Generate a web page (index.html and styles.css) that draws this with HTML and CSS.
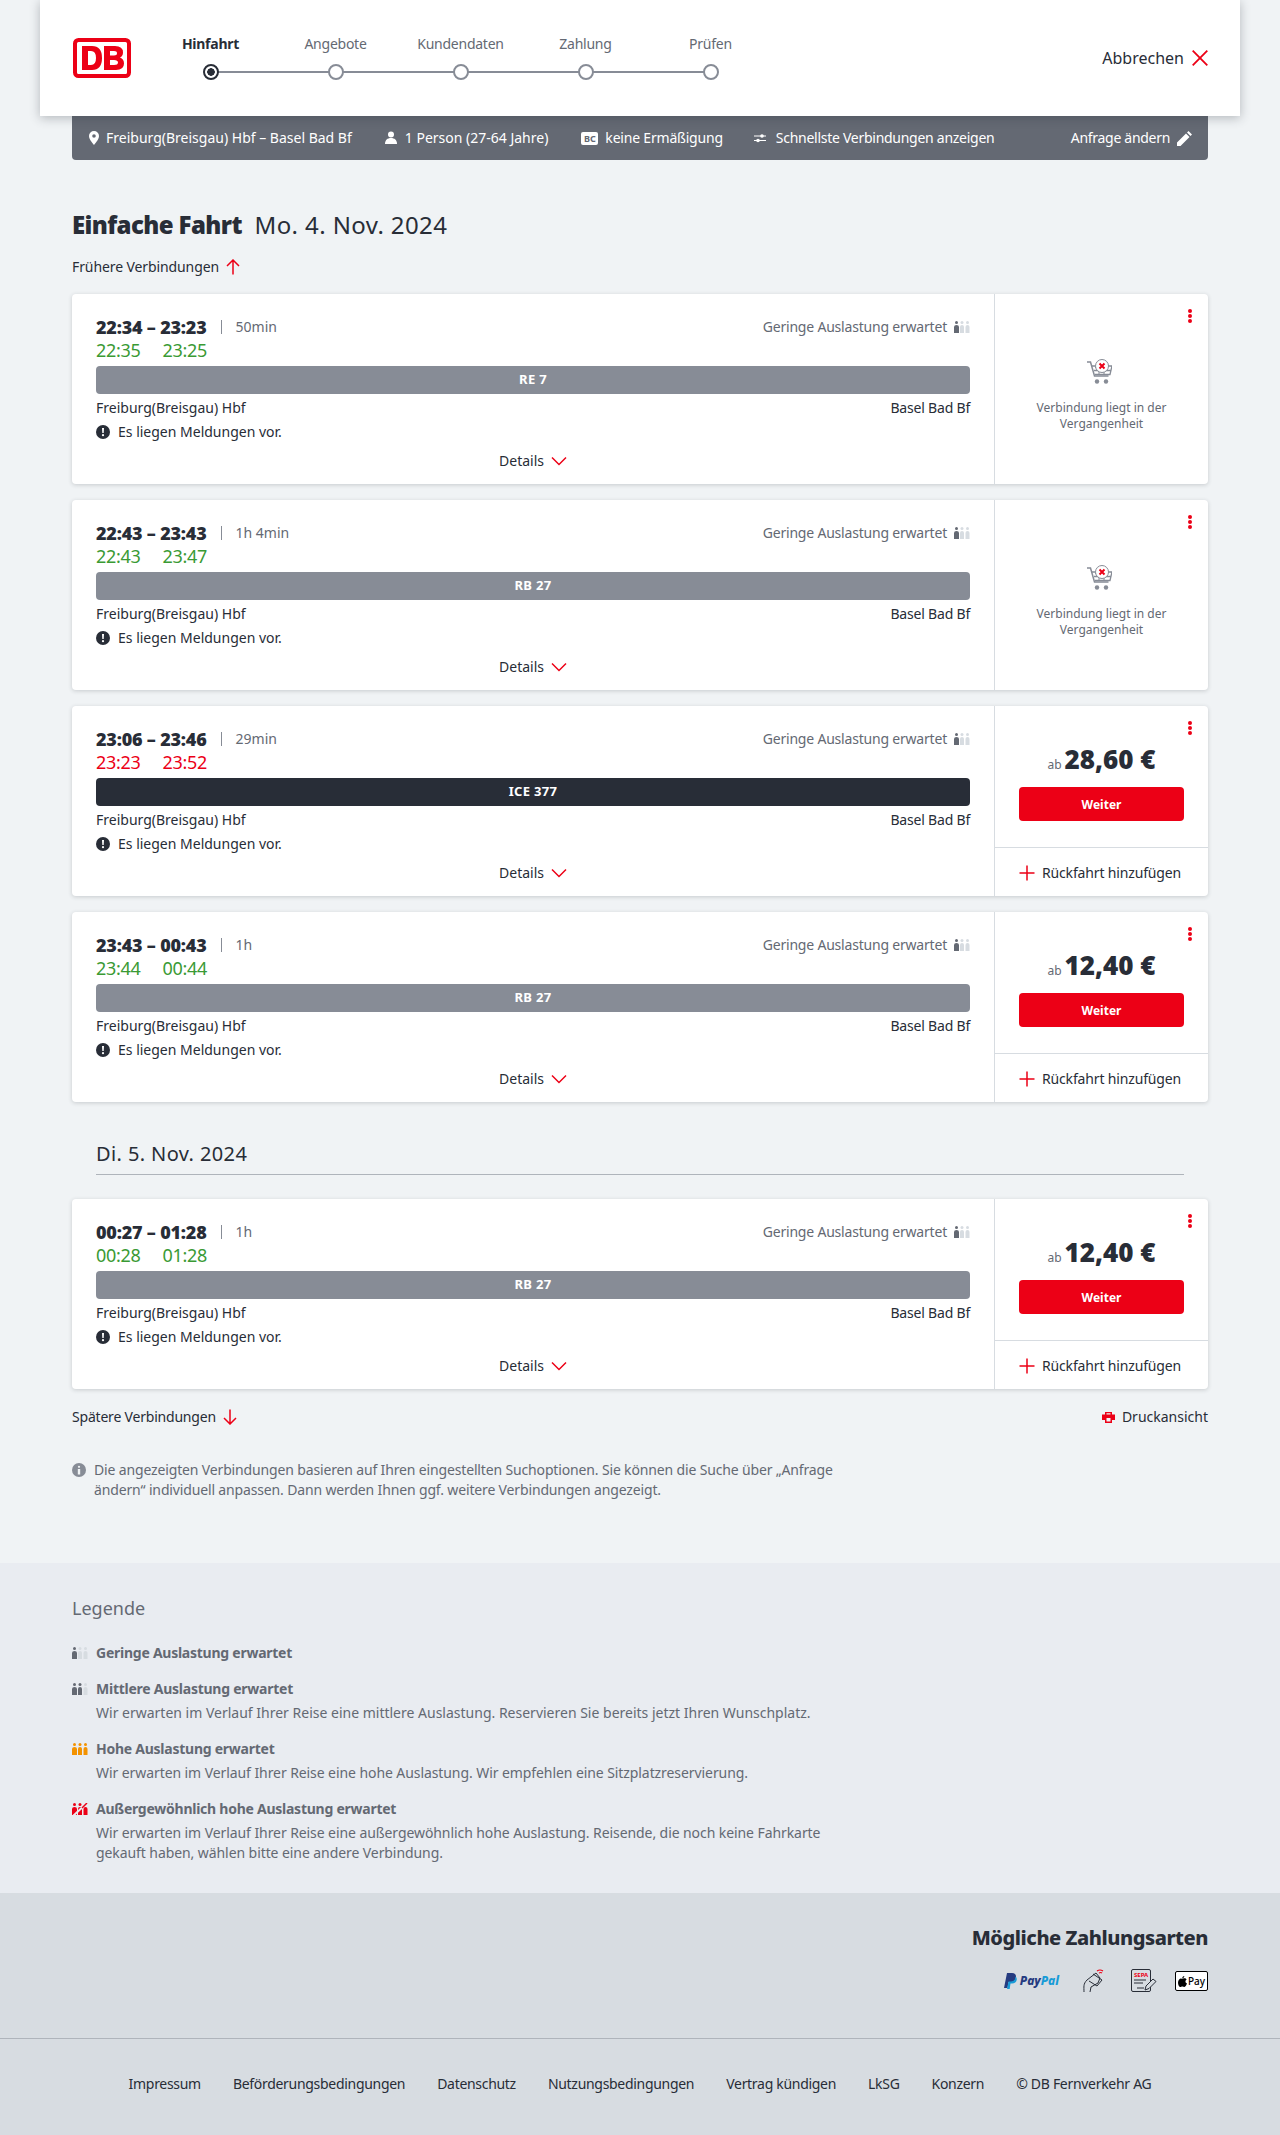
FILE: index.html
```html
<!DOCTYPE html>
<html lang="de">
    <head>
        <title>Verbindungen</title>
        <link rel="stylesheet" href="styles.css">
    </head>
    <body>
        <!-- Shared icons -->
        <svg class="sprite" width="0" height="0">
            <symbol id="i-load" viewBox="0 0 16 12">
                <circle cx="2.5" cy="1.6" r="1.5"/><path d="M0 12V6q0-2 2.5-2T5 6v6z"/>
                <g class="load-off"><circle cx="8" cy="1.6" r="1.5"/><path d="M6 12V6q0-2 2-2t2 2v6z"/><circle cx="13.5" cy="1.6" r="1.5"/><path d="M11.5 12V6q0-2 2-2t2 2v6z"/></g>
            </symbol>
            <symbol id="i-alert" viewBox="0 0 14 14">
                <circle cx="7" cy="7" r="7" fill="#282d37"/><path d="M6 3h2l-.3 5H6.3z" fill="#fff"/><circle cx="7" cy="10.2" r="1.1" fill="#fff"/>
            </symbol>
            <symbol id="i-chev" viewBox="0 0 16 10">
                <path d="M1 1.5l7 7 7-7" fill="none" stroke="#ec0016" stroke-width="1.5"/>
            </symbol>
            <symbol id="i-cart" viewBox="0 0 25 25">
                <path d="M0 3h3.500l4 14h14" fill="none" stroke="#878c96" stroke-width="1.500"/>
                <path d="M5 7h3M20 7h5l-2 8.500H8M7 11.500h16.500" fill="none" stroke="#878c96" stroke-width="1.300"/>
                <path d="M8 8l4 3.500M19 8l-2 3.500M12 11.500v4.500M17 11.500v4.500" fill="none" stroke="#878c96"/>
                <circle cx="15" cy="7" r="6.500" fill="#fff" stroke="#878c96"/>
                <path d="M12.500 4.500l5 5M17.500 4.500l-5 5" stroke="#ec0016" stroke-width="2"/>
                <circle cx="10" cy="22.500" r="2.200" fill="#878c96"/><circle cx="19" cy="22.500" r="2.200" fill="#878c96"/>
            </symbol>
            <symbol id="i-plus" viewBox="0 0 16 16">
                <path d="M8 .5v15M.5 8h15" stroke="#ec0016" stroke-width="1.500"/>
            </symbol>
        </svg>

        <!-- Header with stepper -->
        <header class="header">
            <svg class="logo" viewBox="0 0 58 40">
                <rect x="2" y="2" width="54" height="36" rx="3.500" fill="#fff" stroke="#ec0016" stroke-width="4"/>
                <path fill="#ec0016" fill-rule="evenodd" d="M9 8h10q10 0 10 12t-10 12H9zm6 5v14h3q5 0 5-7t-5-7zM31 8h11q8 0 8 6.500 0 3.500-3 5 4 1.500 4 6 0 6.500-8 6.500H31zm6 5v4.500h4q3 0 3-2.250T41 13zm0 9v5h4q4 0 4-2.500T41 22z"/>
            </svg>
            <ol class="steps">
                <li class="step active"><span>Hinfahrt</span><i class="dot"></i></li>
                <li class="step"><span>Angebote</span><i class="dot"></i></li>
                <li class="step"><span>Kundendaten</span><i class="dot"></i></li>
                <li class="step"><span>Zahlung</span><i class="dot"></i></li>
                <li class="step"><span>Prüfen</span><i class="dot"></i></li>
            </ol>
            <a class="cancel">Abbrechen
                <svg width="16" height="16" viewBox="0 0 16 16"><path d="M.7.7l14.600 14.600M15.300.7L.7 15.300" stroke="#ec0016" stroke-width="1.800"/></svg>
            </a>
        </header>

        <main class="main">
            <!-- Search summary -->
            <div class="query">
                <span class="q-item q-route">
                    <svg width="12" height="14" viewBox="0 0 12 14"><path fill="#fff" fill-rule="evenodd" d="M6 0a5 5 0 0 1 5 5c0 3.500-5 9-5 9S1 8.500 1 5a5 5 0 0 1 5-5zm0 3.200a1.800 1.800 0 1 0 0 3.600 1.800 1.800 0 0 0 0-3.600z"/></svg>
                    Freiburg(Breisgau) Hbf – Basel Bad Bf
                </span>
                <span class="q-item q-person">
                    <svg width="12" height="14" viewBox="0 0 12 14"><circle cx="6" cy="3.500" r="3" fill="#fff"/><path fill="#fff" d="M0 13c0-4 2.500-6 6-6s6 2 6 6z"/></svg>
                    1 Person (27-64 Jahre)
                </span>
                <span class="q-item q-card">
                    <b class="bc">BC</b>
                    keine Ermäßigung
                </span>
                <span class="q-item q-fast">
                    <svg width="12" height="10" viewBox="0 0 12 10"><path d="M0 3h12M0 7.500h12" stroke="#fff"/><circle cx="8" cy="3" r="1.800" fill="#fff"/><circle cx="4" cy="7.500" r="1.800" fill="#fff"/></svg>
                    Schnellste Verbindungen anzeigen
                </span>
                <a class="q-edit">Anfrage ändern
                    <svg width="15" height="15" viewBox="0 0 15 15"><path fill="#fff" d="M0 15v-3.500L9 2.500l3.500 3.500L3.500 15zM10 1.500L11.500 0 15 3.500 13.500 5z"/></svg>
                </a>
            </div>

            <h1 class="title"><b>Einfache Fahrt</b> Mo. 4. Nov. 2024</h1>

            <a class="more">Frühere Verbindungen
                <svg width="14" height="16" viewBox="0 0 14 16"><path d="M7 15.500V1M1 7l6-6 6 6" fill="none" stroke="#ec0016" stroke-width="1.500"/></svg>
            </a>

            <!-- Connection 1 -->
            <article class="card">
                <div class="card-main">
                    <div class="row-top">
                        <span class="times">22:34 – 23:23</span><span class="sep"></span><span class="duration">50min</span>
                        <span class="load">Geringe Auslastung erwartet <svg class="load-icon"><use href="#i-load"/></svg></span>
                    </div>
                    <div class="row-delay"><span class="ok">22:35</span><span class="ok">23:25</span></div>
                    <div class="train">RE 7</div>
                    <div class="row-stations"><span>Freiburg(Breisgau) Hbf</span><span>Basel Bad Bf</span></div>
                    <div class="row-alert"><svg width="14" height="14"><use href="#i-alert"/></svg>Es liegen Meldungen vor.</div>
                    <div class="row-details">Details <svg width="16" height="10"><use href="#i-chev"/></svg></div>
                </div>
                <div class="card-side past">
                    <i class="menu"></i>
                    <svg class="cart" width="25" height="25"><use href="#i-cart"/></svg>
                    <p>Verbindung liegt in der Vergangenheit</p>
                </div>
            </article>

            <!-- Connection 2 -->
            <article class="card">
                <div class="card-main">
                    <div class="row-top">
                        <span class="times">22:43 – 23:43</span><span class="sep"></span><span class="duration">1h 4min</span>
                        <span class="load">Geringe Auslastung erwartet <svg class="load-icon"><use href="#i-load"/></svg></span>
                    </div>
                    <div class="row-delay"><span class="ok">22:43</span><span class="ok">23:47</span></div>
                    <div class="train">RB 27</div>
                    <div class="row-stations"><span>Freiburg(Breisgau) Hbf</span><span>Basel Bad Bf</span></div>
                    <div class="row-alert"><svg width="14" height="14"><use href="#i-alert"/></svg>Es liegen Meldungen vor.</div>
                    <div class="row-details">Details <svg width="16" height="10"><use href="#i-chev"/></svg></div>
                </div>
                <div class="card-side past">
                    <i class="menu"></i>
                    <svg class="cart" width="25" height="25"><use href="#i-cart"/></svg>
                    <p>Verbindung liegt in der Vergangenheit</p>
                </div>
            </article>

            <!-- Connection 3 -->
            <article class="card">
                <div class="card-main">
                    <div class="row-top">
                        <span class="times">23:06 – 23:46</span><span class="sep"></span><span class="duration">29min</span>
                        <span class="load">Geringe Auslastung erwartet <svg class="load-icon"><use href="#i-load"/></svg></span>
                    </div>
                    <div class="row-delay"><span class="late">23:23</span><span class="late">23:52</span></div>
                    <div class="train ice">ICE 377</div>
                    <div class="row-stations"><span>Freiburg(Breisgau) Hbf</span><span>Basel Bad Bf</span></div>
                    <div class="row-alert"><svg width="14" height="14"><use href="#i-alert"/></svg>Es liegen Meldungen vor.</div>
                    <div class="row-details">Details <svg width="16" height="10"><use href="#i-chev"/></svg></div>
                </div>
                <div class="card-side">
                    <i class="menu"></i>
                    <div class="offer">
                        <div class="price"><small>ab</small> 28,60 €</div>
                        <button class="next">Weiter</button>
                    </div>
                    <div class="return"><svg width="16" height="16"><use href="#i-plus"/></svg>Rückfahrt hinzufügen</div>
                </div>
            </article>

            <!-- Connection 4 -->
            <article class="card">
                <div class="card-main">
                    <div class="row-top">
                        <span class="times">23:43 – 00:43</span><span class="sep"></span><span class="duration">1h</span>
                        <span class="load">Geringe Auslastung erwartet <svg class="load-icon"><use href="#i-load"/></svg></span>
                    </div>
                    <div class="row-delay"><span class="ok">23:44</span><span class="ok">00:44</span></div>
                    <div class="train">RB 27</div>
                    <div class="row-stations"><span>Freiburg(Breisgau) Hbf</span><span>Basel Bad Bf</span></div>
                    <div class="row-alert"><svg width="14" height="14"><use href="#i-alert"/></svg>Es liegen Meldungen vor.</div>
                    <div class="row-details">Details <svg width="16" height="10"><use href="#i-chev"/></svg></div>
                </div>
                <div class="card-side">
                    <i class="menu"></i>
                    <div class="offer">
                        <div class="price"><small>ab</small> 12,40 €</div>
                        <button class="next">Weiter</button>
                    </div>
                    <div class="return"><svg width="16" height="16"><use href="#i-plus"/></svg>Rückfahrt hinzufügen</div>
                </div>
            </article>

            <h2 class="day">Di. 5. Nov. 2024</h2>

            <!-- Connection 5 -->
            <article class="card">
                <div class="card-main">
                    <div class="row-top">
                        <span class="times">00:27 – 01:28</span><span class="sep"></span><span class="duration">1h</span>
                        <span class="load">Geringe Auslastung erwartet <svg class="load-icon"><use href="#i-load"/></svg></span>
                    </div>
                    <div class="row-delay"><span class="ok">00:28</span><span class="ok">01:28</span></div>
                    <div class="train">RB 27</div>
                    <div class="row-stations"><span>Freiburg(Breisgau) Hbf</span><span>Basel Bad Bf</span></div>
                    <div class="row-alert"><svg width="14" height="14"><use href="#i-alert"/></svg>Es liegen Meldungen vor.</div>
                    <div class="row-details">Details <svg width="16" height="10"><use href="#i-chev"/></svg></div>
                </div>
                <div class="card-side">
                    <i class="menu"></i>
                    <div class="offer">
                        <div class="price"><small>ab</small> 12,40 €</div>
                        <button class="next">Weiter</button>
                    </div>
                    <div class="return"><svg width="16" height="16"><use href="#i-plus"/></svg>Rückfahrt hinzufügen</div>
                </div>
            </article>

            <div class="below">
                <a class="more later">Spätere Verbindungen
                    <svg width="14" height="16" viewBox="0 0 14 16"><path d="M7 .5V15M1 9l6 6 6-6" fill="none" stroke="#ec0016" stroke-width="1.500"/></svg>
                </a>
                <a class="print">
                    <svg width="13" height="11" viewBox="0 0 13 11"><path fill="#ec0016" fill-rule="evenodd" d="M3 0h7v2.500h3V8h-3v3H3V8H0V2.500h3zm1.500 1.200v1.300h4V1.200zM4.500 6v3.500h4V6z"/></svg>
                    Druckansicht
                </a>
            </div>

            <p class="note">
                <svg width="14" height="14" viewBox="0 0 14 14"><circle cx="7" cy="7" r="7" fill="#878c96"/><circle cx="7" cy="3.800" r="1.100" fill="#f0f3f5"/><path d="M5.800 6h2.400v5.500H5.800z" fill="#f0f3f5"/></svg>
                <span>Die angezeigten Verbindungen basieren auf Ihren eingestellten Suchoptionen. Sie können die Suche über „Anfrage ändern“ individuell anpassen. Dann werden Ihnen ggf. weitere Verbindungen angezeigt.</span>
            </p>
        </main>

        <!-- Legend -->
        <section class="legend">
            <h3>Legende</h3>
            <div class="legend-item">
                <h4><svg class="legend-icon"><use href="#i-load"/></svg>Geringe Auslastung erwartet</h4>
            </div>
            <div class="legend-item wide">
                <h4>
                    <svg class="legend-icon" viewBox="0 0 16 12">
                        <circle cx="2.500" cy="1.600" r="1.500"/><path d="M0 12V6q0-2 2.500-2T5 6v6z"/>
                        <circle cx="8" cy="1.600" r="1.500"/><path d="M6 12V6q0-2 2-2t2 2v6z"/>
                        <g class="load-off"><circle cx="13.500" cy="1.600" r="1.500"/><path d="M11.500 12V6q0-2 2-2t2 2v6z"/></g>
                    </svg>Mittlere Auslastung erwartet
                </h4>
                <p>Wir erwarten im Verlauf Ihrer Reise eine mittlere Auslastung. Reservieren Sie bereits jetzt Ihren Wunschplatz.</p>
            </div>
            <div class="legend-item">
                <h4>
                    <svg class="legend-icon high" viewBox="0 0 16 12">
                        <circle cx="2.500" cy="1.600" r="1.500"/><path d="M0 12V6q0-2 2.500-2T5 6v6z"/>
                        <circle cx="8" cy="1.600" r="1.500"/><path d="M6 12V6q0-2 2-2t2 2v6z"/>
                        <circle cx="13.500" cy="1.600" r="1.500"/><path d="M11.500 12V6q0-2 2-2t2 2v6z"/>
                    </svg>Hohe Auslastung erwartet
                </h4>
                <p>Wir erwarten im Verlauf Ihrer Reise eine hohe Auslastung. Wir empfehlen eine Sitzplatzreservierung.</p>
            </div>
            <div class="legend-item">
                <h4>
                    <svg class="legend-icon full" viewBox="0 0 16 12">
                        <circle cx="2.500" cy="1.600" r="1.500"/><circle cx="8" cy="1.600" r="1.500"/><path d="M0 12V6q0-2 2.500-2T5 6v6zM6 12V6q0-2 2-2t2 2v6zM11.500 12V6q0-2 2-2t2 2v6z"/>
                        <path d="M15.500 -.5L1 13" stroke="#e9ecf1" stroke-width="2"/>
                        <path d="M15 0L10 5" stroke="#ec0016" stroke-width="1.500"/>
                    </svg>Außergewöhnlich hohe Auslastung erwartet
                </h4>
                <p>Wir erwarten im Verlauf Ihrer Reise eine außergewöhnlich hohe Auslastung. Reisende, die noch keine Fahrkarte gekauft haben, wählen bitte eine andere Verbindung.</p>
            </div>
        </section>

        <!-- Payment methods -->
        <section class="payment">
            <h3>Mögliche Zahlungsarten</h3>
            <div class="pay-icons">
                <span class="paypal">
                    <svg width="13" height="16" viewBox="0 0 13 16"><path fill="#253b80" d="M3 0h5q4 0 4 3.500C12 7 9.500 9 6.500 9H4.500l-1 6H0z"/><path fill="#179bd7" d="M11.500 3.500q1.500 1 1.300 3C12.500 9 10.500 10.500 8 10.500H6.500l-.8 5.500H3l.5-2.500 1-5h2q5 0 5-5z"/></svg>
                    <em>Pay</em><em class="pal">Pal</em>
                </span>
                <svg class="pay-contactless" width="22" height="24" viewBox="0 0 22 24">
                    <path d="M1 23c0-5-1-8 3-12l9-7 4 5-2 5-7 4-1 5M6 12l8 5 5-6-9-6" fill="none" stroke="#282d37"/>
                    <path d="M14 2q3-2 6 0M16 4q2-1 3 0" fill="none" stroke="#ec0016" stroke-width="1.200"/>
                </svg>
                <svg class="pay-sepa" width="26" height="24" viewBox="0 0 26 24">
                    <rect x=".5" y=".5" width="19" height="22" rx="1.500" fill="none" stroke="#282d37"/>
                    <text x="3" y="7.500" class="sepa-text">SEPA</text>
                    <path d="M3 11h12M3 14h9M6 19h7" stroke="#282d37"/>
                    <path d="M14 21l1-4 7-7 3 2.500-7 7z" fill="#d7dce1" stroke="#282d37"/>
                </svg>
                <span class="applepay">
                    <svg width="9" height="11" viewBox="0 0 9 11"><path fill="#000" d="M6.300 0c.1 1-.8 2.200-2 2.200C4.100 1.200 5.200 0 6.300 0zM4.400 2.700c.6 0 1-.4 2-.4 1 0 1.800.5 2.200 1.200-1.800 1-1.500 3.400.4 4.100C8.500 8.800 7.500 11 6.400 11c-.8 0-1-.5-2-.5s-1.300.5-2 .5C1.200 11 0 8.700 0 6.700 0 4.200 1.600 2.400 3 2.400c.5 0 1 .3 1.400.3z"/></svg>Pay
                </span>
            </div>
        </section>

        <footer class="footer">
            <a>Impressum</a>
            <a>Beförderungsbedingungen</a>
            <a>Datenschutz</a>
            <a>Nutzungsbedingungen</a>
            <a>Vertrag kündigen</a>
            <a>LkSG</a>
            <a>Konzern</a>
            <a>© DB Fernverkehr AG</a>
        </footer>
    </body>
</html>
```

FILE: styles.css
```css
/* Page */
body {
    margin: 0;
    font-family: "Noto Sans", "Liberation Sans", sans-serif;
    font-size: 14px;
    line-height: 20px;
    color: #282d37;
    background-color: #f0f3f5;
}

.sprite {
    position: absolute;
}

h1, h2, h3, h4, p, ol {
    margin: 0;
    padding: 0;
}

/* Header with stepper */
.header {
    position: relative;
    z-index: 2;
    display: flex;
    align-items: center;
    box-sizing: border-box;
    width: 1200px;
    height: 116px;
    margin: 0 auto;
    padding: 0 32px 0 33px;
    background-color: #fff;
    box-shadow: 0 2px 10px rgba(40, 45, 55, 0.3);
}

.logo {
    width: 58px;
    height: 40px;
    flex: none;
}

.steps {
    display: flex;
    list-style: none;
    margin-left: 17px;
    height: 116px;
}

.step {
    position: relative;
    width: 125px;
    display: flex;
    flex-direction: column;
    align-items: center;
    padding-top: 34px;
    color: #646973;
    letter-spacing: -0.25px;
}

.step span {
    height: 20px;
    font-size: 14px;
}

.step.active span {
    font-weight: 700;
    color: #282d37;
}

.dot {
    position: relative;
    z-index: 1;
    box-sizing: border-box;
    width: 16px;
    height: 16px;
    margin-top: 10px;
    border: 2px solid #878c96;
    border-radius: 50%;
    background-color: #fff;
}

.active .dot {
    border-color: #282d37;
    background: radial-gradient(circle, #282d37 0 3.500px, #fff 4px);
}

/* Connector line between the steps */
.step:not(:last-child)::after {
    content: "";
    position: absolute;
    left: 50%;
    top: 71px;
    width: 125px;
    height: 2px;
    background-color: #878c96;
}

.cancel {
    display: flex;
    align-items: center;
    gap: 8px;
    margin-left: auto;
    font-size: 16px;
}

/* Main area */
.main {
    padding: 0 72px 63px;
}

.query {
    display: flex;
    align-items: center;
    height: 44px;
    padding: 0 16px;
    border-radius: 0 0 4px 4px;
    background-color: #646973;
    color: #fff;
    font-size: 14px;
}

.q-item {
    display: flex;
    align-items: center;
}

.q-route {
    margin-right: 33px;
}

.q-route svg {
    margin-right: 6px;
}

.q-person {
    margin-right: 33px;
}

.q-person svg {
    margin-right: 8px;
}

.q-card {
    margin-right: 31px;
    letter-spacing: -0.2px;
}

.bc {
    width: 17px;
    height: 13px;
    margin-right: 7px;
    border-radius: 2px;
    background-color: #fff;
    color: #646973;
    font-size: 9px;
    line-height: 13px;
    letter-spacing: 0;
    text-align: center;
}

.q-fast {
    letter-spacing: -0.27px;
}

.q-fast svg {
    margin-right: 10px;
}

.q-edit {
    display: flex;
    align-items: center;
    gap: 7px;
    margin-left: auto;
    letter-spacing: -0.3px;
}

.title {
    margin-top: 49px;
    font-size: 24px;
    line-height: 32px;
    font-weight: 400;
    letter-spacing: 0.4px;
}

.title b {
    font-weight: 900;
    margin-right: 6px;
    letter-spacing: -0.6px;
}

.more {
    display: flex;
    align-items: center;
    gap: 7px;
    height: 20px;
    letter-spacing: -0.1px;
}

.more.later {
    letter-spacing: -0.2px;
}

.title + .more {
    margin-top: 16px;
    margin-bottom: 17px;
}

/* Connection cards */
.card {
    display: flex;
    height: 190px;
    margin-bottom: 16px;
    border-radius: 4px;
    background-color: #fff;
    box-shadow: 0 1px 4px rgba(40, 45, 55, 0.2);
}

.card-main {
    box-sizing: border-box;
    width: 922px;
    padding: 21px 24px 0;
}

.row-top {
    display: flex;
    align-items: center;
    height: 24px;
}

.times {
    font-size: 18px;
    font-weight: 900;
    letter-spacing: -0.2px;
}

.sep {
    width: 1px;
    height: 14px;
    margin: 0 14px;
    background-color: #878c96;
}

.duration {
    color: #646973;
    font-size: 14px;
}

.load {
    display: flex;
    align-items: center;
    margin-left: auto;
    color: #646973;
    font-size: 14px;
    letter-spacing: -0.2px;
}

.load-icon {
    width: 16px;
    height: 12px;
    margin-left: 7px;
    fill: #646973;
}

.load-off {
    fill: #d7dce1;
}

.row-delay {
    display: flex;
    gap: 22px;
    height: 22px;
    font-size: 18px;
    line-height: 22px;
    letter-spacing: -0.3px;
}

.ok {
    color: #3a9a34;
}

.late {
    color: #ec0016;
}

.train {
    height: 28px;
    margin-top: 5px;
    border-radius: 4px;
    background-color: #878c96;
    color: #fff;
    font-size: 13px;
    font-weight: 700;
    line-height: 27px;
    letter-spacing: 0.3px;
    text-align: center;
}

.train.ice {
    background-color: #282d37;
}

.row-stations {
    display: flex;
    justify-content: space-between;
    margin-top: 4px;
}

.row-stations span:last-child {
    letter-spacing: -0.2px;
}

.row-alert {
    display: flex;
    align-items: center;
    gap: 8px;
    margin-top: 4px;
}

.row-details {
    display: flex;
    justify-content: center;
    align-items: center;
    gap: 7px;
    margin-top: 9px;
}

.card-side {
    position: relative;
    display: flex;
    flex-direction: column;
    flex: 1;
    border-left: 1px solid #d7dce1;
}

/* Three-dot menu in the card corner */
.menu {
    position: absolute;
    top: 15px;
    right: 16px;
    width: 4px;
    height: 4px;
    border-radius: 50%;
    background-color: #ec0016;
    box-shadow: 0 5px #ec0016, 0 10px #ec0016;
}

.past {
    align-items: center;
    padding-top: 65px;
}

.cart {
    margin-left: -4px;
}

.past p {
    width: 150px;
    margin-top: 16px;
    color: #646973;
    font-size: 12px;
    line-height: 16px;
    text-align: center;
}

.offer {
    flex: 1;
    padding: 35px 24px 0;
}

.price {
    height: 36px;
    font-size: 26px;
    font-weight: 900;
    line-height: 36px;
    text-align: center;
}

.price small {
    margin-right: -4px;
    color: #646973;
    font-size: 12px;
    font-weight: 400;
}

.next {
    display: block;
    width: 100%;
    height: 34px;
    margin-top: 10px;
    border: 0;
    border-radius: 4px;
    background-color: #ec0016;
    color: #fff;
    font-family: inherit;
    font-size: 12px;
    font-weight: 700;
}

.return {
    display: flex;
    align-items: center;
    justify-content: center;
    gap: 7px;
    box-sizing: border-box;
    height: 49px;
    padding: 2px 3px 0 0;
    border-top: 1px solid #d7dce1;
    letter-spacing: -0.15px;
}

.day {
    margin: 36px 24px 24px;
    padding-bottom: 4px;
    border-bottom: 1px solid #afb4bb;
    font-size: 20px;
    font-weight: 400;
    line-height: 32px;
    letter-spacing: 0.4px;
}

.below {
    display: flex;
    justify-content: space-between;
    margin-top: 18px;
}

.print {
    display: flex;
    align-items: center;
    gap: 7px;
}

.note {
    display: flex;
    gap: 8px;
    width: 768px;
    margin-top: 33px;
    color: #646973;
    letter-spacing: -0.15px;
}

.note svg {
    flex: none;
    margin-top: 3px;
}

/* Legend */
.legend {
    padding: 33px 72px 14px;
    background-color: #e9ecf1;
    color: #646973;
}

.legend h3 {
    font-size: 18px;
    font-weight: 400;
    line-height: 24px;
    margin-bottom: 23px;
}

.legend-item {
    width: 760px;
    margin-bottom: 16px;
}

.legend-item h4 {
    display: flex;
    align-items: center;
    gap: 8px;
    font-size: 14px;
    font-weight: 700;
    letter-spacing: -0.25px;
}

.legend-item p {
    margin-top: 4px;
    padding-left: 24px;
    letter-spacing: -0.08px;
}

.legend-item.wide p {
    letter-spacing: 0;
}

.legend-icon {
    width: 16px;
    height: 12px;
    flex: none;
    fill: #646973;
}

.legend-icon.high {
    fill: #f39200;
}

.legend-icon.full {
    fill: #ec0016;
}

/* Payment */
.payment {
    height: 145px;
    box-sizing: border-box;
    padding: 31px 72px 0;
    background-color: #d7dce1;
    text-align: right;
}

.payment h3 {
    font-size: 20px;
    font-weight: 800;
    line-height: 28px;
    letter-spacing: -0.45px;
}

.pay-icons {
    display: flex;
    justify-content: flex-end;
    align-items: center;
    gap: 26px;
    height: 24px;
    margin-top: 17px;
}

.paypal {
    display: flex;
    align-items: center;
    gap: 3px;
    margin-right: -2px;
    font-size: 12px;
    font-weight: 800;
    color: #253b80;
}

.paypal em + em {
    margin-left: -3px;
}

.pal {
    color: #179bd7;
}

.sepa-text {
    fill: #ec0016;
    font-size: 6px;
    font-weight: 700;
}

.applepay {
    display: flex;
    align-items: center;
    justify-content: center;
    box-sizing: border-box;
    width: 33px;
    height: 20px;
    margin-left: -8px;
    border: 1px solid #000;
    border-radius: 2px;
    background-color: #fff;
    color: #000;
    font-size: 10px;
    font-weight: 500;
    gap: 1px;
}

/* Footer */
.footer {
    display: flex;
    justify-content: center;
    gap: 32px;
    height: 97px;
    box-sizing: border-box;
    padding-top: 35px;
    border-top: 1px solid #afb4bb;
    background-color: #d7dce1;
    letter-spacing: -0.3px;
}
```
